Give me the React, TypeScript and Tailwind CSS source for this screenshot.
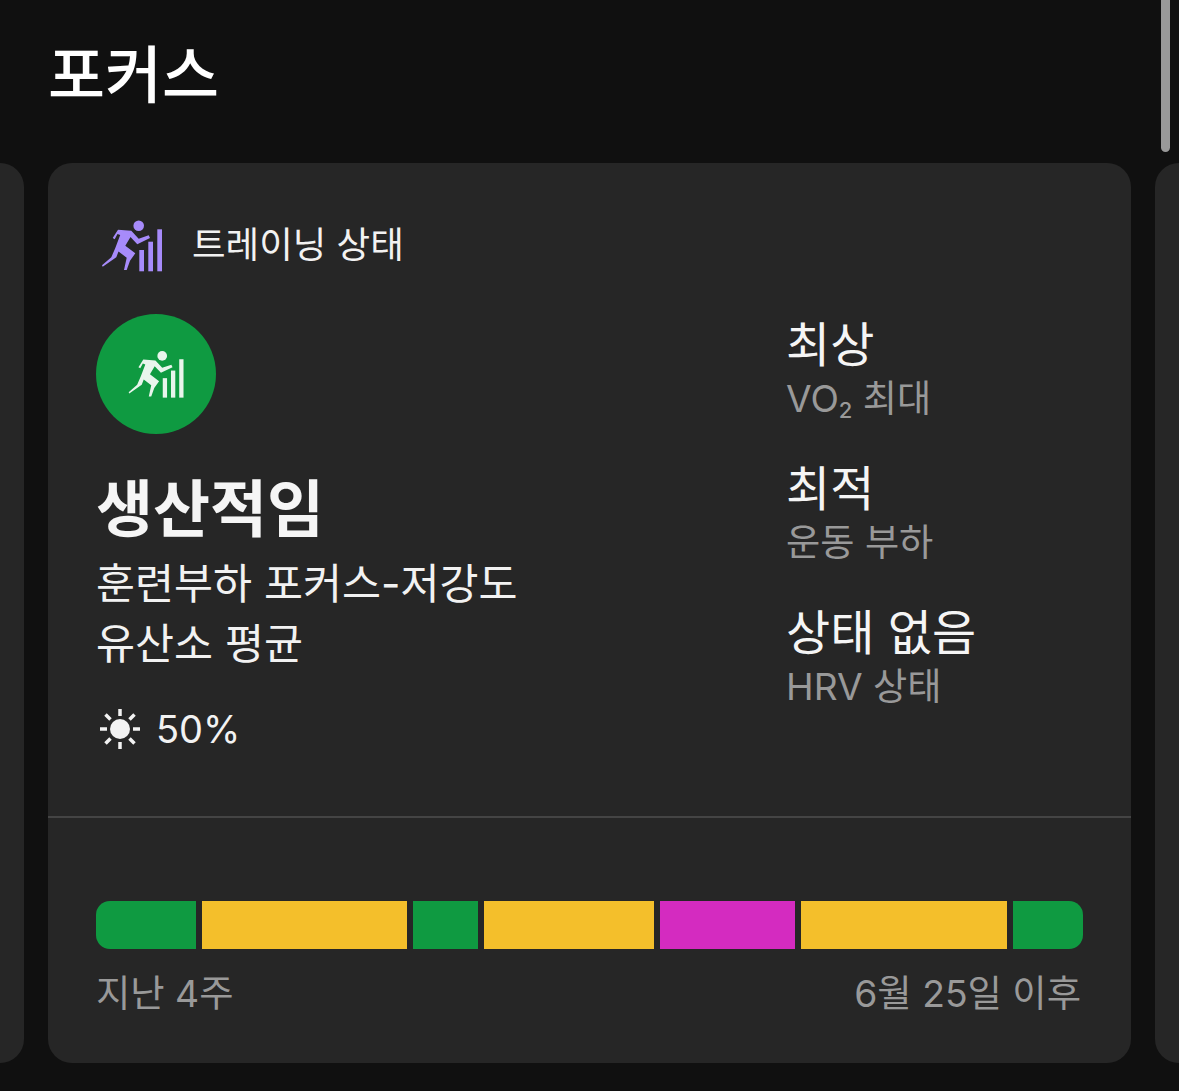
import React from "react";

const FONT = "font-['Inter','Noto_Sans_CJK_KR',sans-serif]";

// running figure next to three rising bars (training status)
const TrainingIcon: React.FC<{ className: string }> = ({ className }) => (
  <svg viewBox="0 0 70 60" fill="currentColor" className={className}>
    <circle cx="40.7" cy="9.7" r="5.3" />
    <path d="M14.7 22 20 13.7 33.3 14.7 40.7 22.700 50.7 19.3 52 22 39.3 28.200 32.500 21 27.300 29.700 37.3 37.3 32 44.7 28.7 54 26 54 28.7 41.7 20.500 35.500 18.3 41.3 4.7 50.7 4 49.3 13.3 41.300 17.3 32 22.200 19 19.500 18 16.7 23.3Z" />
    <rect x="41.3" y="34" width="4.7" height="21.3" />
    <rect x="50.3" y="25.7" width="4.7" height="29.6" />
    <rect x="59.3" y="13.3" width="4.7" height="42" />
  </svg>
);

const SunIcon: React.FC = () => (
  <svg viewBox="0 0 40 40" className="h-10 w-10 text-[#f2f2f2]" fill="currentColor" stroke="currentColor">
    <circle cx="20" cy="20" r="10" stroke="none" />
    <path strokeWidth="3.5" d="M20 0v7M20 33v7M0 20h7M33 20h7M5.500 5.500l5 5M29.500 29.500l5 5M34.500 5.500l-5 5M10.500 29.500l-5 5" />
  </svg>
);

const STATS = [
  { value: "최상", label: <>VO<span className="align-[-6px] text-[22px] font-medium leading-none">2</span> 최대</> },
  { value: "최적", label: "운동 부하" },
  { value: "상태 없음", label: "HRV 상태" },
];

const SEGMENTS = [
  "w-[100px] bg-[#0f9a41] rounded-l-[14px]",
  "w-[205px] bg-[#f4bf2b]",
  "w-[65px] bg-[#0f9a41]",
  "w-[170px] bg-[#f4bf2b]",
  "w-[135px] bg-[#d42bc0]",
  "w-[206px] bg-[#f4bf2b]",
  "w-[70px] bg-[#0f9a41] rounded-r-[14px]",
];

export default function App() {
  return (
    <div className={`relative h-[1091px] w-[1179px] overflow-hidden bg-[#101010] ${FONT}`}>
      {/* scroll indicator */}
      <div className="absolute right-[9px] top-0 h-[152px] w-[9px] rounded-b-full bg-[#999999]" />

      <h1 className="h-[163px] pl-12 pt-[38px] text-[62px] font-medium leading-[76px] text-white">포커스</h1>

      <div className="flex h-[900px] gap-6">
        <div className="w-6 rounded-r-[24px] bg-[#262626]" />

        <div className="flex w-[1083px] flex-col rounded-[24px] bg-[#262626]">
          <div className="flex h-[655px] border-b-2 border-[#444444] pl-12 pr-12">
            <div className="flex-1 pt-[56px]">
              <div className="flex h-[52px] items-center">
                <TrainingIcon className="ml-[2px] mt-[2px] h-[60px] w-[70px] text-[#a78bfa]" />
                <span className="ml-6 text-[36.5px] leading-[52px] text-[#f2f2f2]">트레이닝 상태</span>
              </div>
              <div className="mt-[43px] flex h-[120px] w-[120px] items-center justify-center rounded-full bg-[#0f9a41]">
                <TrainingIcon className="ml-[2px] h-[55px] w-[64px] text-[#e8f5ec]" />
              </div>
              <div className="mt-[36px] text-[62px] font-bold leading-[80px] text-[#f5f5f5]">생산적임</div>
              <div className="mt-[4px] text-[42.4px] leading-[60px] text-[#f2f2f2]">훈련부하 포커스-저강도</div>
              <div className="text-[42.4px] leading-[60px] text-[#f2f2f2]">유산소 평균</div>
              <div className="mt-[31px] flex items-center gap-4 text-[38px] leading-[48px] text-[#f2f2f2]">
                <span className="ml-1"><SunIcon /></span>
                <span>50%</span>
              </div>
            </div>

            <div className="flex w-[297px] flex-col gap-[12px] pt-[152px]">
              {STATS.map((stat) => (
                <div key={stat.value} className="h-[132px]">
                  <div className="text-[48px] leading-[60px] text-[#f5f5f5]">{stat.value}</div>
                  <div className="text-[37.2px] leading-[48px] text-[#999999]">{stat.label}</div>
                </div>
              ))}
            </div>
          </div>

          <div className="px-12 pt-[83px]">
            <div className="flex h-12 gap-[6px]">
              {SEGMENTS.map((seg) => (
                <div key={seg} className={`h-12 ${seg}`} />
              ))}
            </div>
            <div className="mt-[20px] flex justify-between pr-[2px] text-[37.3px] leading-[50px] text-[#999999]">
              <span>지난 4주</span>
              <span>6월 25일 이후</span>
            </div>
          </div>
        </div>

        <div className="w-6 rounded-l-[24px] bg-[#262626]" />
      </div>
    </div>
  );
}
